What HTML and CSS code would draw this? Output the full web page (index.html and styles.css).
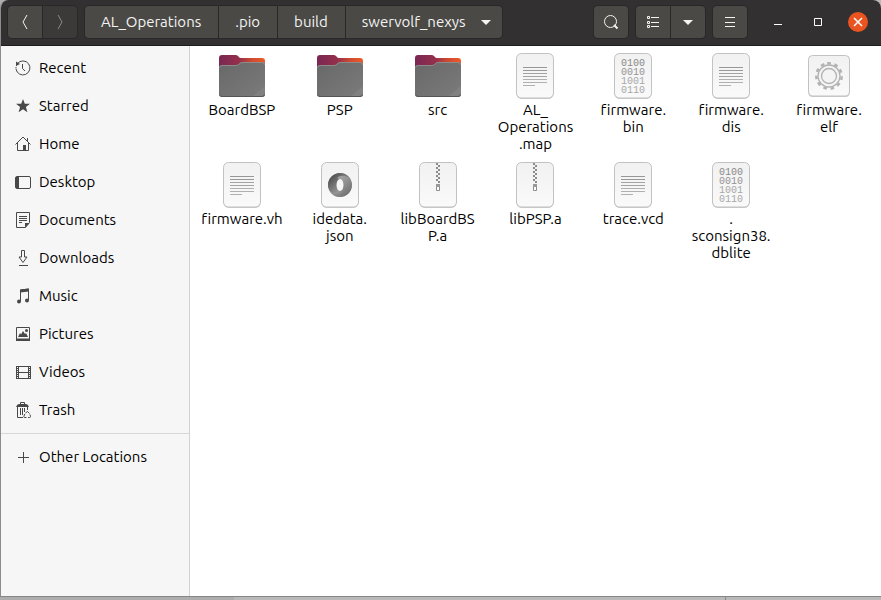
FILE: index.html
```html
<!DOCTYPE html>
<html lang="en">
<head>
<meta charset="utf-8">
<title>swervolf_nexys</title>
<link rel="stylesheet" href="styles.css">
</head>
<body>
<svg class="defs" aria-hidden="true">
  <defs>
    <linearGradient id="paper" x1="0" y1="0" x2="0" y2="1"><stop offset="0" stop-color="#f1f1f1"/><stop offset="1" stop-color="#fafafa"/></linearGradient>
    <linearGradient id="back" x1="0" y1="0" x2="1" y2="0"><stop offset="0" stop-color="#792754"/><stop offset=".45" stop-color="#96304a"/><stop offset=".7" stop-color="#cc4932"/><stop offset="1" stop-color="#ed5c26"/></linearGradient>
    <linearGradient id="front" x1="0" y1="0" x2="1" y2="1"><stop offset="0" stop-color="#686868"/><stop offset="1" stop-color="#7b7b7b"/></linearGradient>
    <linearGradient id="ringA" x1="0" y1="0" x2="1" y2="1"><stop offset="0" stop-color="#3c3c3c"/><stop offset="1" stop-color="#c4c4c4"/></linearGradient>
    <linearGradient id="ringB" x1="0" y1="0" x2="1" y2="1"><stop offset="0" stop-color="#d0d0d0"/><stop offset="1" stop-color="#5a5a5a"/></linearGradient>
    <symbol id="folder" viewBox="0 0 48 48">
      <path d="M1 16V6q0-3 3-3h14q1.500 0 2.500 1.500T23 6h21q3 0 3 3v10H1z" fill="url(#back)"/>
      <path d="M1 16q0-3 3-3h14q2 0 3-1.300t3-1.700h20q3 0 3 3v29q0 3-3 3H4q-3 0-3-3z" fill="url(#front)"/>
      <path d="M1.500 16q0-2.500 2.500-2.500h14q2 0 3-1.300t3-1.700h20q2.500 0 2.500 2.500" fill="none" stroke="#999" stroke-opacity=".7"/>
      <path d="M47 34v8q0 3-3 3H34z" fill="#818181"/>
      <path d="M1.500 42.500q.5 2 2.500 2h40q2 0 2.500-2" fill="none" stroke="#565656"/>
    </symbol>
    <symbol id="sheet" viewBox="0 0 48 48">
      <rect x="5.500" y="2" width="37" height="45" rx="5" fill="#a8a8a8" opacity=".6"/>
      <rect x="5.500" y="1.500" width="37" height="44.500" rx="5" fill="url(#paper)" stroke="#c2c2c2"/>
    </symbol>
    <symbol id="text" viewBox="0 0 48 48">
      <use href="#sheet"/>
      <path d="M12 15.500h24M12 18.500h24" stroke="#989898"/>
      <path d="M12 21.500h24M12 24.500h24" stroke="#a3a3a3"/>
      <path d="M12 27.500h24M12 30.500h24M12 33.500h12" stroke="#b0b0b0"/>
    </symbol>
    <symbol id="binary" viewBox="0 0 48 48">
      <use href="#sheet"/>
      <g class="digits" text-anchor="middle"><text x="24" y="14" fill="#888">0100</text><text x="24" y="23" fill="#939393">0010</text><text x="24" y="32" fill="#a8a8a8">1001</text><text x="24" y="41" fill="#a8a8a8">0110</text></g>
    </symbol>
    <symbol id="zip" viewBox="0 0 48 48">
      <use href="#sheet"/>
      <path d="M23 2v20" stroke="#8c8c8c" stroke-width="2" stroke-dasharray="2"/>
      <path d="M25 4v18" stroke="#8c8c8c" stroke-width="2" stroke-dasharray="2"/>
      <path d="M22.500 23.500h3v6h-3z" fill="#fff" stroke="#8c8c8c"/><path d="M22 23h4v3h-4z" fill="#999"/>
    </symbol>
    <symbol id="json" viewBox="0 0 48 48">
      <use href="#sheet"/>
      <circle cx="24" cy="24" r="12" fill="#858585"/>
      <path d="M24 18c-5 2-4 11 3 13-5 5-15 1-15-7 0-7 6-12 12-12 5 0 9 3 10 6-3-3-7-3-10 0z" fill="url(#ringA)"/>
      <path d="M24 30c5-2 4-11-3-13 5-5 15-1 15 7 0 7-6 12-12 12-5 0-9-3-10-6 3 3 7 3 10 0z" fill="url(#ringB)" opacity=".75"/>
      <ellipse cx="24" cy="24" rx="3.500" ry="6" fill="#f6f6f6"/>
    </symbol>
    <symbol id="exec" viewBox="0 0 48 48">
      <rect x="3.500" y="4" width="41" height="41" rx="4" fill="#a8a8a8" opacity=".6"/>
      <rect x="3.500" y="3.500" width="41" height="40.500" rx="4" fill="url(#paper)" stroke="#c2c2c2"/>
      <circle cx="24" cy="24" r="12.700" fill="none" stroke="#b2b2b2" stroke-width="2.500" stroke-dasharray="3.600 3.654" stroke-dashoffset="-1.800" transform="rotate(-106 24 24)"/>
      <circle cx="24" cy="24" r="11" fill="#f4f4f4" stroke="#b2b2b2" stroke-width="1.300"/>
      <circle cx="24" cy="24" r="7.500" fill="none" stroke="#b2b2b2" stroke-width="1.300"/>
    </symbol>
  </defs>
</svg>
<div class="window">
  <header class="bar">
    <nav class="group" aria-label="History">
      <button class="btn" aria-label="Back"><svg viewBox="0 0 16 16"><path d="M10 1 6 8l4 7"/></svg></button>
      <button class="btn off" aria-label="Forward" disabled><svg viewBox="0 0 16 16"><path d="m6 1 4 7-4 7"/></svg></button>
    </nav>
    <nav class="group path" aria-label="Path">
      <button class="btn crumb">AL_Operations</button>
      <button class="btn crumb">.pio</button>
      <button class="btn crumb">build</button>
      <button class="btn crumb last">swervolf_nexys<svg viewBox="0 0 16 16"><path class="solid" d="M3 6h10l-5 5z"/></svg></button>
    </nav>
    <div class="tools">
      <div class="group"><button class="btn" aria-label="Search"><svg viewBox="0 0 16 16"><circle cx="7.500" cy="7.500" r="6"/><path d="m11 11 3.500 3.500" stroke-width="2"/></svg></button></div>
      <div class="group">
        <button class="btn" aria-label="List view"><svg viewBox="0 0 16 16"><path d="M2.500 2.500h2v2h-2zM2.500 7.500h2v2h-2zM2.500 11.500h2v2h-2zM6 3.500h8M6 8.500h8M6 12.500h8"/></svg></button>
        <button class="btn" aria-label="View options"><svg viewBox="0 0 16 16"><path class="solid" d="M3 6h10l-5 5z"/></svg></button>
      </div>
      <div class="group"><button class="btn" aria-label="Menu"><svg viewBox="0 0 16 16"><path d="M3 3.500h10M3 8.500h10M3 12.500h10"/></svg></button></div>
    </div>
    <div class="controls">
      <button class="ctl" aria-label="Minimize"><svg viewBox="0 0 16 16"><path d="M4 10.500h8"/></svg></button>
      <button class="ctl" aria-label="Maximize"><svg viewBox="0 0 16 16"><path d="M4.500 4.500h7v7h-7z"/></svg></button>
      <button class="ctl close" aria-label="Close"><svg viewBox="0 0 16 16"><path d="m4 4 8 8m0-8-8 8" stroke-width="1.500"/></svg></button>
    </div>
  </header>
  <div class="content">
    <nav class="side" aria-label="Places">
      <a href="#"><svg viewBox="0 0 16 16"><path d="M2.500 3.500A7 7 0 1 1 1 9"/><path d="M1 8.500Q.8 6.500 2 4.500" stroke-dasharray="1.500 1"/><path d="M7.500 4v4.500L10 11"/><path class="solid" d="M1 1.500 5 4l-4 2z"/></svg>Recent</a>
      <a href="#"><svg viewBox="0 0 16 16"><path class="solid" d="m8 1 1.800 4.800H15l-4.100 3.200 1.500 5.200L8 11.200l-4.400 3L5.100 9 1 5.800h5.200z"/></svg>Starred</a>
      <a href="#"><svg viewBox="0 0 16 16"><path d="M.5 8.500 8 1l7.500 7.500M2.500 7v7.500h11V7M12.500 2v3"/><path class="solid" d="M8 9h3v6H8z"/></svg>Home</a>
      <a href="#"><svg viewBox="0 0 16 16"><rect x=".5" y="2.500" width="15" height="12" rx="1.500"/><path class="solid" d="M1 3h3v11H1z"/></svg>Desktop</a>
      <a href="#"><svg viewBox="0 0 16 16"><path d="M1.500.5h13v10l-4 5h-9zM4 4.500h8M4 6.500h8M4 8.500h8M4 10.500h3"/><path class="solid" d="M10 15.500V11h4.500z"/></svg>Documents</a>
      <a href="#"><svg viewBox="0 0 16 16"><path d="M6.500.500h3v6.500h2.500L8 12.500 4 7h2.500zM4 15.500h9"/></svg>Downloads</a>
      <a href="#"><svg viewBox="0 0 16 16"><path d="M5.500 13V2l8-1v11"/><path class="solid" d="M5 1.500 14 .500v3L5 4.500z"/><circle class="solid" cx="4" cy="13.500" r="2"/><circle class="solid" cx="12" cy="12.500" r="2"/></svg>Music</a>
      <a href="#"><svg viewBox="0 0 16 16"><path d="M1.500 1.500h13v13h-13z"/><path class="solid" d="M1 12.500h14V15H1zM3 11l2-4 1 1.500L8 5l2 3 1-1 2 4z"/><circle class="solid" cx="11.500" cy="4.500" r="1.500"/></svg>Pictures</a>
      <a href="#"><svg viewBox="0 0 16 16"><path d="M3.500 2v13M13.500 2v13M3 2.500h11M3 8.500h11M3 14.500h11"/><path d="M2 2v13M15 2v13" stroke-width="2" stroke-dasharray="1 1"/><path d="M1.500 2v13M15.500 2v13"/></svg>Videos</a>
      <a href="#"><svg viewBox="0 0 16 16"><path d="M5.500 2.500v-2h4v2M2.500 5v10.500H8M12.500 5v3M5.500 6v7M7.500 6v7M9.500 6v4"/><path class="solid" d="M1 5q1-3 3-3h7q2 0 3 3z"/><path d="m10.500 11 2-1.500 2 2M9.800 12l-1 2.500q0 1 1 1h1.700M15 12.500l.5 2q0 1-1 1h-1.500"/></svg>Trash</a>
      <hr>
      <a href="#"><svg viewBox="0 0 16 16"><path d="M8.500 3v11M3 8.500h11"/></svg>Other Locations</a>
    </nav>
    <main class="files">
      <a href="#"><svg><use href="#folder"/></svg><span>BoardBSP</span></a>
      <a href="#"><svg><use href="#folder"/></svg><span>PSP</span></a>
      <a href="#"><svg><use href="#folder"/></svg><span>src</span></a>
      <a href="#"><svg><use href="#text"/></svg><span>AL_<br>Operations<br>.map</span></a>
      <a href="#"><svg><use href="#binary"/></svg><span>firmware.<br>bin</span></a>
      <a href="#"><svg><use href="#text"/></svg><span>firmware.<br>dis</span></a>
      <a href="#"><svg><use href="#exec"/></svg><span>firmware.<br>elf</span></a>
      <a href="#"><svg><use href="#text"/></svg><span>firmware.vh</span></a>
      <a href="#"><svg><use href="#json"/></svg><span>idedata.<br>json</span></a>
      <a href="#"><svg><use href="#zip"/></svg><span>libBoardBS<br>P.a</span></a>
      <a href="#"><svg><use href="#zip"/></svg><span>libPSP.a</span></a>
      <a href="#"><svg><use href="#text"/></svg><span>trace.vcd</span></a>
      <a href="#"><svg><use href="#binary"/></svg><span>.<br>sconsign38.<br>dblite</span></a>
    </main>
  </div>
</div>
</body>
</html>
```
FILE: styles.css
```css
* { box-sizing: border-box; }

body {
  margin: 0;
  height: 100vh;
  padding-bottom: 3px;
  background: linear-gradient(to right, #adadad 234px, #b9b9b9 234px 725px, #8a8a8a 725px 726px, #b9b9b9 726px);
  font: 15px/20px Ubuntu, "Noto Sans", sans-serif;
  font-variant-ligatures: none;
  color: #000;
}

.defs { position: absolute; width: 0; height: 0; }

a { color: inherit; text-decoration: none; }

.window {
  display: flex;
  flex-direction: column;
  height: 100%;
  border-left: 1px solid #8c8c8c;
  border-bottom: 1px solid #858585;
  border-radius: 8px 8px 0 0;
  overflow: hidden;
  background: #fff;
}

.bar {
  display: flex;
  align-items: center;
  padding: 5px 13px 6px 6px;
  background: #323031;
  border-bottom: 1px solid #1e1c1d;
}

.group {
  display: flex;
  gap: 1px;
  padding: 1px;
  margin-right: 6px;
  background: #292728;
  border-radius: 5px;
}

.btn {
  display: flex;
  align-items: center;
  justify-content: center;
  width: 34px;
  height: 32px;
  padding: 0;
  border: 0;
  background: #4a4946;
  color: #f4f4f2;
  font: inherit;
}

.btn:first-child { border-radius: 4px 0 0 4px; }
.btn:last-child { border-radius: 0 4px 4px 0; }
.btn:only-child { border-radius: 4px; }
.btn.off { background: #3b3a39; color: #8b8b89; }

.btn.crumb { width: auto; padding: 0 17px 0 16px; }
.btn.last { padding-right: 8px; gap: 12px; }

svg { flex: none; width: 16px; height: 16px; }

.bar svg, .side svg { fill: none; stroke: currentColor; }
.bar .solid, .side .solid { fill: currentColor; stroke: none; }

.tools { display: flex; margin-left: auto; }

.controls { display: flex; gap: 20px; margin-left: 14px; }

.ctl {
  display: grid;
  place-items: center;
  width: 20px;
  height: 20px;
  padding: 0;
  border: 0;
  border-radius: 50%;
  background: none;
  color: #fff;
}

.close { background: #e95420; }

.content { display: flex; flex: 1; min-height: 0; }

.side {
  width: 189px;
  padding-top: 3px;
  background: #f6f6f6;
  border-right: 1px solid #d2d2d2;
}

.side a {
  display: flex;
  align-items: center;
  gap: 8px;
  height: 38px;
  padding-left: 14px;
}

.side svg { color: #484848; }

.side hr {
  margin: 4px 0;
  border: 0;
  border-top: 1px solid #d8d8d8;
}

.files {
  flex: 1;
  display: grid;
  grid-template-columns: repeat(7, 1fr);
  align-content: start;
  row-gap: 9px;
  padding: 6px 3px;
  line-height: 17px;
  text-align: center;
}

.files a {
  display: flex;
  flex-direction: column;
  align-items: center;
  gap: 1px;
}

.files svg { width: 48px; height: 48px; }

.digits { font: 10px "Liberation Mono", monospace; }
```
